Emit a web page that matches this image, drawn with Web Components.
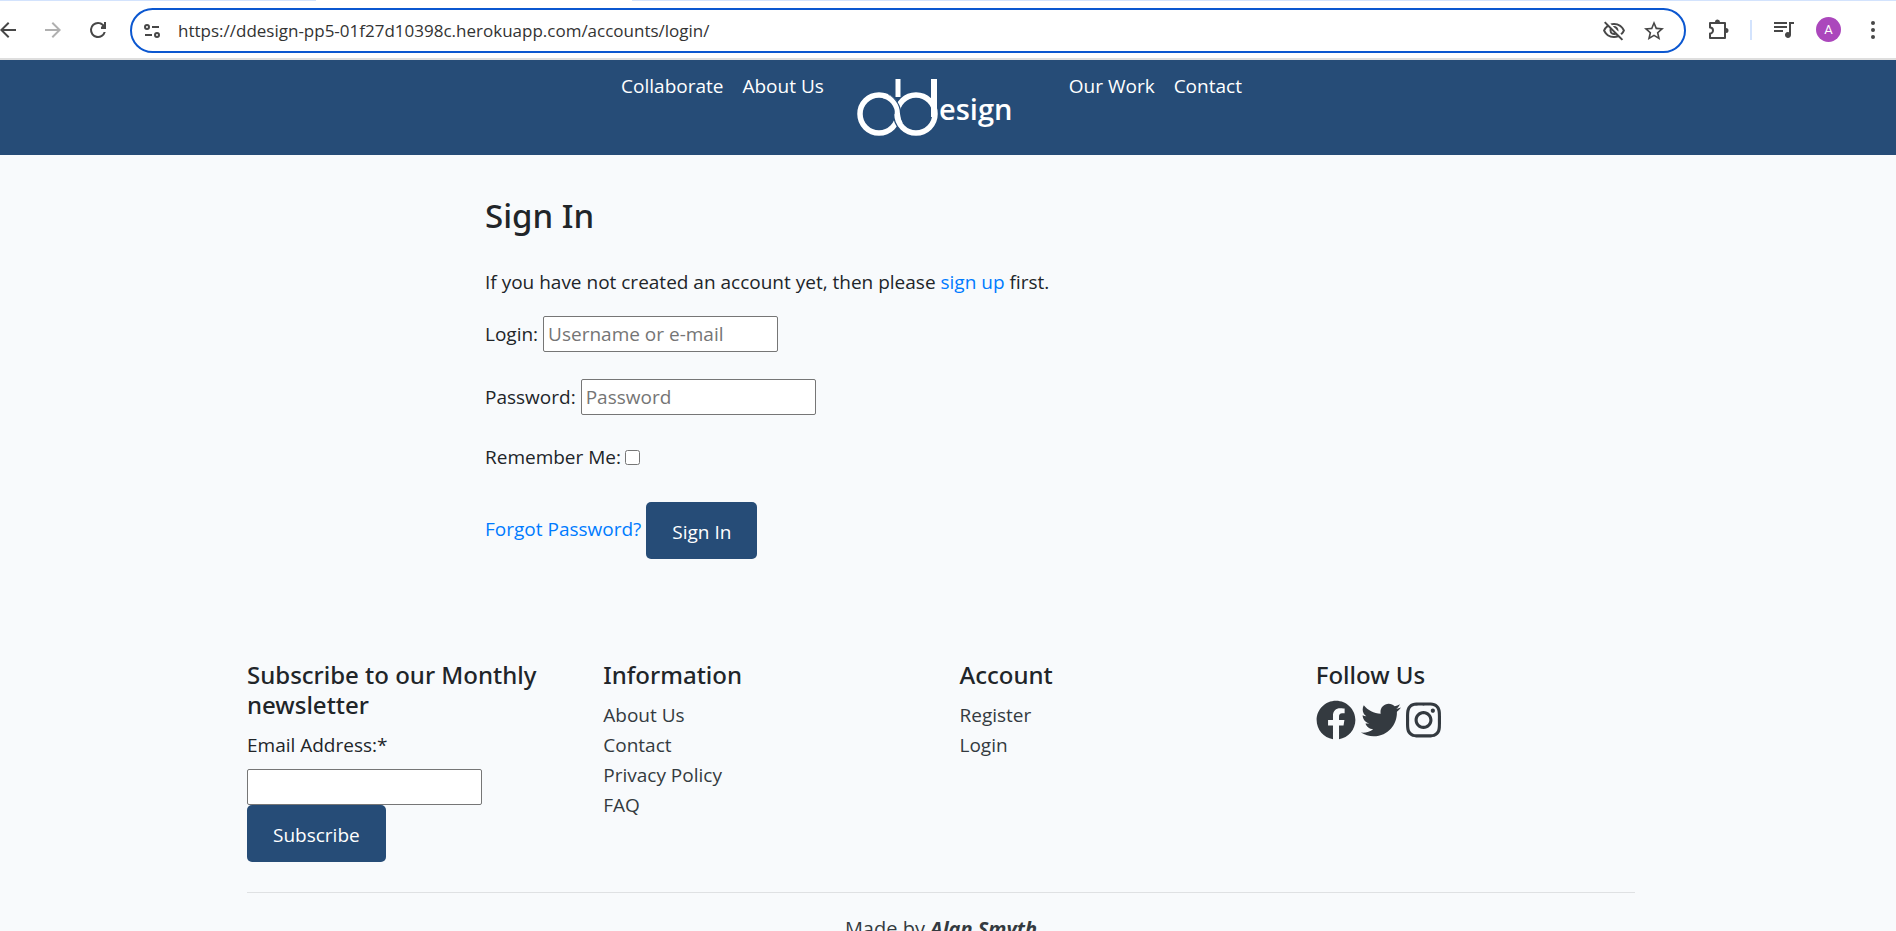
<!DOCTYPE html>
<html lang="en">
<head>
<meta charset="utf-8">
<title>DDesign - Sign In</title>
<style>
  body { margin: 0; font: 19px/30px "Open Sans", sans-serif; color: #212529; background: #f8fafc; }
</style>
</head>
<body>
<app-shell>
  <browser-bar slot="chrome"></browser-bar>
  <site-nav slot="nav"></site-nav>
  <sign-in-form></sign-in-form>
  <site-footer slot="footer"></site-footer>
</app-shell>

<template id="app-shell">
  <style>
    :host { display: flex; flex-direction: column; height: 100vh; overflow: hidden; }
    .page { flex: 1; min-height: 0; overflow: hidden; }
    .content { padding-right: 14px; }
    .container { max-width: 1388px; margin: 0 auto; padding: 0 18px; }
  </style>
  <slot name="chrome"></slot>
  <div class="page">
    <slot name="nav"></slot>
    <div class="content">
      <main class="container"><slot></slot></main>
      <div class="container"><slot name="footer"></slot></div>
    </div>
  </div>
</template>

<template id="browser-bar">
  <style>
    :host { display: block; background: #fff; border-bottom: 2px solid #dedede; color: #474747; }
    .tabs { display: flex; height: 1px; background: #d3e3fd; }
    .tabs i { flex: 0 0 316px; margin-left: 316px; background: #fff; }
    .bar { display: flex; align-items: center; height: 57px; padding-right: 11px; }
    button { display: block; border: 0; padding: 0; background: none; color: inherit; width: 24px; height: 24px; }
    svg { display: block; width: 24px; height: 24px; fill: currentColor; }
    .back { margin-left: -4px; }
    .forward { margin-left: 21px; color: #b0b0b0; }
    .reload { margin-left: 21px; }
    form { flex: 1; display: flex; align-items: center; box-sizing: border-box; height: 45px; margin: 2px 20px 0 20px; padding: 0 18px 0 8px; border: 2px solid #0b57d0; border-radius: 23px; }
    input { flex: 1; min-width: 0; border: 0; padding: 0; margin: 0 14px; outline: 0; background: none; font: 17px/24px "Open Sans", sans-serif; color: #333; }
    .star { margin-left: 16px; }
    .sep { width: 2px; height: 20px; margin: 0 20px; background: #d3e3fd; }
    .avatar { display: grid; place-items: center; width: 25px; height: 25px; border-radius: 50%; background: #ab47bc; color: #fff; font: 13px/25px Roboto, sans-serif; margin: 0 20px; }
  </style>
  <div class="tabs"><i></i></div>
  <div class="bar">
    <button class="back" aria-label="Back"><svg viewBox="0 0 24 24"><path d="M20 11H7.8l5.6-5.6L12 4l-8 8 8 8 1.4-1.4L7.8 13H20z"/></svg></button>
    <button class="forward" aria-label="Forward"><svg viewBox="0 0 24 24"><path d="M4 11h12.2l-5.6-5.6L12 4l8 8-8 8-1.4-1.4 5.6-5.6H4z"/></svg></button>
    <button class="reload" aria-label="Reload"><svg viewBox="0 0 24 24"><path d="M17.65 6.35A7.96 7.96 0 0 0 12 4a8 8 0 1 0 7.73 10h-2.08A6 6 0 1 1 12 6c1.66 0 3.14.69 4.22 1.78L15 9v2h5V4h-2v2.700z"/></svg></button>
    <form>
      <button type="button" aria-label="View site information"><svg viewBox="0 0 24 24"><g fill="none" stroke="currentColor" stroke-width="2"><circle cx="7" cy="8" r="2"/><path d="M12 8h7M5 16h7"/><circle cx="17" cy="16" r="2"/></g></svg></button>
      <input aria-label="Address" value="https://ddesign-pp5-01f27d10398c.herokuapp.com/accounts/login/">
      <button type="button" aria-label="Third-party cookies blocked"><svg viewBox="0 0 24 24"><path d="M12 6a9.77 9.77 0 0 1 8.82 5.5 9.6 9.6 0 0 1-2.41 3.12l1.41 1.41A11.8 11.8 0 0 0 23 11.5C21.270 7.110 17 4 12 4c-1.270 0-2.490.2-3.640.57l1.650 1.650C10.660 6.090 11.320 6 12 6zm-1.070 1.140L13 9.210c.57.25 1.030.71 1.280 1.280l2.070 2.070c.08-.34.14-.7.14-1.070C16.500 9.010 14.480 7 12 7c-.37 0-.72.05-1.070.14zM2.010 3.870l2.680 2.680A11.740 11.740 0 0 0 1 11.500C2.730 15.890 7 19 12 19c1.520 0 2.980-.29 4.320-.82l3.420 3.420 1.410-1.410L3.420 2.450zm7.500 7.500 2.610 2.610c-.04.01-.08.02-.12.02a2.500 2.500 0 0 1-2.500-2.500c0-.05.01-.08.01-.13zm-3.400-3.400 1.750 1.750a4.600 4.600 0 0 0-.36 1.780 4.507 4.507 0 0 0 6.270 4.140l.98.98c-.88.24-1.800.38-2.750.38a9.770 9.770 0 0 1-8.820-5.500c.7-1.430 1.720-2.610 2.930-3.530z"/></svg></button>
      <button type="button" class="star" aria-label="Bookmark this tab"><svg viewBox="0 0 24 24"><path d="M22 9.240l-7.190-.62L12 2 9.190 8.630 2 9.240l5.460 4.730L5.820 21 12 17.270 18.180 21l-1.630-7.030zM12 15.400l-3.760 2.270 1-4.280-3.320-2.880 4.380-.38L12 6.100l1.710 4.040 4.380.38-3.320 2.880 1 4.280z"/></svg></button>
    </form>
    <button aria-label="Extensions"><svg viewBox="0 0 24 24"><path fill="none" stroke="currentColor" stroke-width="2" stroke-linejoin="round" d="M4 5h15v15H4v-4.500a3 3 0 0 0 0-6z"/><path d="M9 4a2.500 2.500 0 0 1 5 0zM20 10a2.500 2.500 0 0 1 0 5z"/></svg></button>
    <span class="sep"></span>
    <button aria-label="Media controls"><svg viewBox="0 0 24 24"><path d="M22 4v2h-3v11a3 3 0 1 1-2-2.830V4zM2 4h13v2H2zm0 4h13v2H2zm0 4h9v2H2z"/></svg></button>
    <span class="avatar">A</span>
    <button aria-label="Menu"><svg viewBox="0 0 24 24"><circle cx="12" cy="5" r="2"/><circle cx="12" cy="12" r="2"/><circle cx="12" cy="19" r="2"/></svg></button>
  </div>
</template>

<template id="site-nav">
  <style>
    :host { display: block; background: #264c77; }
    nav { display: flex; justify-content: center; align-items: flex-start; min-height: 95px; padding-right: 33px; }
    .links { display: flex; gap: 19px; padding-top: 11px; }
    a { color: #fff; text-decoration: none; }
    svg { display: block; width: 245px; height: 95px; }
    text { font: 600 29px "Open Sans", sans-serif; fill: #fff; }
  </style>
  <nav>
    <div class="links"><a href="#">Collaborate</a><a href="#">About Us</a></div>
    <a href="#" aria-label="DDesign home">
      <svg viewBox="0 0 245 95" fill="none" stroke="#fff">
        <circle cx="55" cy="54" r="19" stroke-width="5.500"/>
        <circle cx="92" cy="54" r="19" stroke="#264c77" stroke-width="8"/>
        <circle cx="92" cy="54" r="19" stroke-width="5.500"/>
        <path d="M63 37.500A19 19 0 0 1 74 54" stroke="#264c77" stroke-width="7"/>
        <path d="M59 35.500A19 19 0 0 1 73.500 54q.5 6 3 10" stroke-width="5"/>
        <path d="M74 19v18" stroke-width="5"/>
        <path d="M110 19v38" stroke-width="6"/>
        <text x="115" y="60" stroke="none">esign</text>
      </svg>
    </a>
    <div class="links"><a href="#">Our Work</a><a href="#">Contact</a></div>
  </nav>
</template>

<template id="action-button">
  <style>
    :host { display: block; }
    button { display: block; border: 0; border-radius: 5px; padding: 15px 26px 12px; background: #264c77; color: #fff; font: inherit; }
  </style>
  <button><slot></slot></button>
</template>

<template id="text-field">
  <style>
    :host { display: flex; align-items: center; gap: 5px; }
    :host([stacked]) { flex-direction: column; align-items: flex-start; gap: 9px; }
    input { box-sizing: border-box; width: 235px; height: 36px; border: 1px solid #767676; border-radius: 2px; padding: 0 4px; background: #fff; font: inherit; }
    input::placeholder { color: #757575; }
  </style>
  <label for="field"></label>
  <input id="field">
</template>

<template id="sign-in-form">
  <style>
    :host { display: block; padding: 40px 0 0 238px; }
    h1 { margin: 0 0 30px; font: 500 33px/42px "Noto Sans", sans-serif; }
    p { margin: 0 0 19px; }
    a { color: #007bff; text-decoration: none; }
    form { display: grid; gap: 27px; }
    .check { display: flex; align-items: center; gap: 4px; }
    .check input { width: 15px; height: 15px; margin: 0; }
    .actions { display: flex; align-items: center; gap: 5px; padding-top: 3px; }
    .actions a { padding-bottom: 4px; }
  </style>
  <h1>Sign In</h1>
  <p>If you have not created an account yet, then please <a href="#">sign up</a> first.</p>
  <form>
    <text-field label="Login:" placeholder="Username or e-mail"></text-field>
    <text-field label="Password:" placeholder="Password" type="password"></text-field>
    <div class="check"><label for="remember">Remember Me:</label><input type="checkbox" id="remember"></div>
    <div class="actions"><a href="#">Forgot Password?</a><action-button>Sign In</action-button></div>
  </form>
</template>

<template id="site-footer">
  <style>
    :host { display: block; padding-top: 101px; }
    .columns { display: grid; grid-template-columns: repeat(4, 1fr); column-gap: 37px; padding-bottom: 30px; border-bottom: 1px solid #dfe1e3; }
    h2 { margin: 0 0 10px; font: 500 24px/30px "Noto Sans", sans-serif; }
    ul { list-style: none; margin: 0; padding: 0; }
    a { color: #343a40; text-decoration: none; }
    .social { display: flex; gap: 5px; }
    .social svg { display: block; height: 40px; fill: #343a40; }
    p { margin: 21px 0; text-align: center; font-size: 20px; color: #343a40; }
  </style>
  <div class="columns">
    <section>
      <h2>Subscribe to our Monthly newsletter</h2>
      <text-field label="Email Address:*" type="email" stacked></text-field>
      <action-button>Subscribe</action-button>
    </section>
    <section>
      <h2>Information</h2>
      <ul><li><a href="#">About Us</a></li><li><a href="#">Contact</a></li><li><a href="#">Privacy Policy</a></li><li><a href="#">FAQ</a></li></ul>
    </section>
    <section>
      <h2>Account</h2>
      <ul><li><a href="#">Register</a></li><li><a href="#">Login</a></li></ul>
    </section>
    <section>
      <h2>Follow Us</h2>
      <div class="social">
        <a href="#" aria-label="Facebook"><svg viewBox="0 0 512 512"><path d="M504 256C504 119 393 8 256 8S8 119 8 256c0 123.780 90.690 226.380 209.250 245V327.690h-63V256h63v-54.640c0-62.150 37-96.480 93.670-96.480 27.140 0 55.520 4.840 55.520 4.840v61h-31.280c-30.800 0-40.410 19.120-40.410 38.730V256h68.780l-11 71.690h-57.780V501C413.310 482.380 504 379.780 504 256z"/></svg></a>
        <a href="#" aria-label="Twitter"><svg viewBox="0 0 512 512"><path d="M459.370 151.716c.325 4.548.325 9.097.325 13.645 0 138.720-105.583 298.558-298.558 298.558-59.452 0-114.680-17.219-161.137-47.106 8.447.974 16.568 1.299 25.340 1.299 49.055 0 94.213-16.568 130.274-44.832-46.132-.975-84.792-31.188-98.112-72.772 6.498.974 12.995 1.624 19.818 1.624 9.421 0 18.843-1.300 27.614-3.573-48.081-9.747-84.143-51.980-84.143-102.985v-1.299c13.969 7.797 30.214 12.670 47.431 13.319-28.264-18.843-46.781-51.005-46.781-87.391 0-19.492 5.197-37.360 14.294-52.954 51.655 63.675 129.300 105.258 216.365 109.807-1.624-7.797-2.599-15.918-2.599-24.040 0-57.828 46.782-104.934 104.934-104.934 30.213 0 57.502 12.670 76.670 33.137 23.715-4.548 46.456-13.320 66.599-25.340-7.798 24.366-24.366 44.833-46.132 57.827 21.117-2.273 41.584-8.122 60.426-16.243-14.292 20.791-32.161 39.308-52.628 54.253z"/></svg></a>
        <a href="#" aria-label="Instagram"><svg viewBox="0 0 448 512"><path d="M224.100 141c-63.600 0-114.900 51.300-114.900 114.900s51.300 114.900 114.900 114.900S339 319.500 339 255.900 287.700 141 224.100 141zm0 189.600c-41.100 0-74.700-33.500-74.700-74.700s33.500-74.700 74.700-74.700 74.700 33.500 74.700 74.700-33.600 74.700-74.700 74.700zm146.400-194.300c0 14.900-12 26.800-26.800 26.800-14.900 0-26.800-12-26.800-26.800s12-26.800 26.800-26.800 26.800 12 26.800 26.800zm76.100 27.200c-1.700-35.900-9.900-67.700-36.200-93.900-26.200-26.200-58-34.400-93.900-36.200-37-2.100-147.900-2.100-184.900 0-35.800 1.700-67.600 9.900-93.900 36.100s-34.400 58-36.200 93.900c-2.100 37-2.100 147.900 0 184.900 1.700 35.900 9.900 67.700 36.200 93.900s58 34.400 93.900 36.200c37 2.100 147.900 2.100 184.900 0 35.900-1.700 67.700-9.900 93.900-36.200 26.200-26.200 34.400-58 36.200-93.900 2.100-37 2.100-147.800 0-184.800zM398.800 388c-7.800 19.600-22.900 34.700-42.600 42.600-29.500 11.700-99.500 9-132.100 9s-102.700 2.600-132.100-9c-19.600-7.800-34.700-22.900-42.600-42.600-11.700-29.500-9-99.500-9-132.100s-2.600-102.700 9-132.100c7.800-19.600 22.900-34.700 42.600-42.600 29.500-11.700 99.500-9 132.100-9s102.700-2.600 132.100 9c19.600 7.800 34.700 22.900 42.600 42.600 11.700 29.500 9 99.500 9 132.100s2.700 102.700-9 132.100z"/></svg></a>
      </div>
    </section>
  </div>
  <p>Made by <strong><em>Alan Smyth</em></strong></p>
</template>

<script>
  class TemplateElement extends HTMLElement {
    constructor() {
      super();
      const template = document.getElementById(this.localName);
      this.attachShadow({ mode: 'open' }).append(template.content.cloneNode(true));
    }
  }
  class TextField extends TemplateElement {
    connectedCallback() {
      const input = this.shadowRoot.querySelector('input');
      this.shadowRoot.querySelector('label').textContent = this.getAttribute('label');
      input.type = this.getAttribute('type') || 'text';
      input.placeholder = this.getAttribute('placeholder') || '';
    }
  }
  customElements.define('text-field', TextField);
  for (const name of ['action-button', 'browser-bar', 'site-nav', 'sign-in-form', 'site-footer', 'app-shell']) {
    customElements.define(name, class extends TemplateElement {});
  }
</script>
</body>
</html>
